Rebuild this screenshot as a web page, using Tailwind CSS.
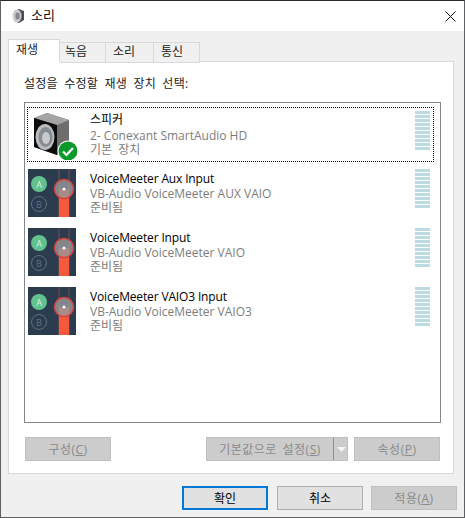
<!DOCTYPE html>
<html><head><meta charset="utf-8">
<script src="https://cdn.jsdelivr.net/npm/@tailwindcss/browser@4"></script>
</head>
<body class="w-[465px] h-[518px] overflow-hidden bg-[#5a5a58] font-['Open_Sans','Noto_Sans_CJK_KR',sans-serif] text-[12px] leading-[15px] text-black">
<div class="w-[465px] h-[518px] border border-[#5f6062] border-t-[#2b2b2b] bg-[#f0f0f0] flex flex-col">
  <!-- title -->
  <div class="h-[30px] bg-white flex items-center shrink-0">
    <svg class="ml-[10px] w-[14px] h-[16px]" viewBox="0 0 14 16"><path d="M3 3 8 1 13 3 13 12 8 15 3 13Z" fill="#4f4f4f"/><ellipse cx="6" cy="8" rx="4.500" ry="6.500" fill="#c8ccd0"/><ellipse cx="6.500" cy="8" rx="2.200" ry="3.500" fill="#83878b"/></svg>
    <span class="ml-[6px] mb-[2px] text-[13px] text-[#111]">소리</span>
    <svg class="ml-auto mr-[8px] w-[11px] h-[11px]" viewBox="0 0 11 11"><path d="M.5.5l10 10M10.5.5l-10 10" stroke="#111" stroke-width="1" fill="none"/></svg>
  </div>
  <!-- tabs + panel -->
  <div class="pt-[8px] px-[7px] flex flex-col">
    <div class="flex h-[23px] items-end relative z-10 text-[#222]">
      <div class="w-[52px] h-[23px] bg-white border border-b-0 border-[#d9d9d9] pt-[2px] pl-[7px]">재생</div>
      <div class="w-[46px] h-[21px] -mb-px bg-[#f0f0f0] border border-l-0 border-[#d9d9d9] pt-[1px] pl-[5px]">녹음</div>
      <div class="w-[48px] h-[21px] -mb-px bg-[#f0f0f0] border border-l-0 border-[#d9d9d9] pt-[1px] pl-[7px]">소리</div>
      <div class="w-[46px] h-[21px] -mb-px bg-[#f0f0f0] border border-l-0 border-[#d9d9d9] pt-[1px] pl-[7px]">통신</div>
    </div>
    <div class="w-[446px] h-[413px] -mt-px bg-white border border-[#d9d9d9] pt-[14px] pl-[15px] flex flex-col">
      <div class="h-[15px] text-[#222] tracking-[0.25px] [word-spacing:3px]">설정을 수정할 재생 장치 선택:</div>
      <div class="mt-[11px] w-[417px] h-[321px] border border-[#82878c] pt-[4px] pl-[2px] flex flex-col">
        <!-- row 1 -->
        <div class="w-[407px] h-[55px] border border-dotted border-black flex relative">
          <svg class="absolute left-[5px] top-[4px] w-[48px] h-[48px]" viewBox="0 0 48 48">
            <path d="M1 6 14 1 36 8 36 38 24 43 1 35Z" fill="#6e6e6e"/>
            <path d="M14 1 36 8 24 13 1 6Z" fill="#a4a4a4"/>
            <path d="M1 6 24 13 24 43 1 35Z" fill="#0c0c0c"/>
            <ellipse cx="12" cy="25" rx="9.500" ry="13" fill="#b8bcbf"/>
            <ellipse cx="12.500" cy="25" rx="7" ry="10" fill="#878c90"/>
            <ellipse cx="13" cy="26" rx="4" ry="6" fill="#c8cbcd"/>
            <circle cx="35" cy="39" r="10.500" fill="#fff"/>
            <circle cx="35" cy="39" r="9.500" fill="#0a9a2a"/>
            <path d="M30 39.500l3.500 3.500 6.500-7" stroke="#fff" stroke-width="2.200" fill="none"/>
          </svg>
          <div class="ml-[62px] mt-[4px] flex flex-col text-[#7d7d7d]">
            <div class="text-black h-[17px] [word-spacing:3px]">스피커</div>
            <div class="h-[14px] leading-[14px]">2- Conexant SmartAudio HD</div>
            <div class="h-[14px] leading-[14px] [word-spacing:3px]">기본 장치</div>
          </div>
          <div class="absolute left-[387px] top-[3px] w-[15px] h-[40px] bg-[repeating-linear-gradient(to_bottom,#bddce2_0,#bddce2_3px,transparent_3px,transparent_4px)]"></div>
        </div>
        <!-- rows 2-4 -->
        <div class="h-[4px]"></div>
        <div class="w-[407px] h-[55px] flex relative mb-[4px]">
          <svg class="absolute left-[1px] top-[3px] w-[48px] h-[48px]" viewBox="0 0 48 48">
            <rect width="48" height="48" fill="#2b3c4e"/>
            <circle cx="11" cy="15" r="8" fill="#62c28e"/>
            <text x="11" y="18.500" font-size="9" fill="#d8f0e2" text-anchor="middle">A</text>
            <circle cx="11" cy="35" r="7.500" fill="none" stroke="#5d7183"/>
            <text x="11" y="38.500" font-size="9" fill="#5d7183" text-anchor="middle">B</text>
            <path d="M31 0V48M41 0V48" stroke="#7e4c50" stroke-width="1"/>
            <rect x="31" y="20" width="10" height="28" fill="#f5583b"/>
            <circle cx="36" cy="20" r="9.500" fill="#98989c" fill-opacity=".8" stroke="#d9433a" stroke-width="1.500"/>
            <circle cx="36" cy="20" r="1.500" fill="#fff"/>
          </svg>
          <div class="ml-[63px] mt-[5px] flex flex-col text-[#7d7d7d]">
            <div class="text-black h-[16px] tracking-[-0.15px]">VoiceMeeter Aux Input</div>
            <div class="h-[14px] leading-[14px]">VB-Audio VoiceMeeter AUX VAIO</div>
            <div class="h-[14px] leading-[14px]">준비됨</div>
          </div>
          <div class="absolute left-[388px] top-[3px] w-[15px] h-[40px] bg-[repeating-linear-gradient(to_bottom,#bddce2_0,#bddce2_3px,transparent_3px,transparent_4px)]"></div>
        </div>
        <div class="w-[407px] h-[55px] flex relative mb-[4px]">
          <svg class="absolute left-[1px] top-[3px] w-[48px] h-[48px]" viewBox="0 0 48 48">
            <rect width="48" height="48" fill="#2b3c4e"/>
            <circle cx="11" cy="15" r="8" fill="#62c28e"/>
            <text x="11" y="18.500" font-size="9" fill="#d8f0e2" text-anchor="middle">A</text>
            <circle cx="11" cy="35" r="7.500" fill="none" stroke="#5d7183"/>
            <text x="11" y="38.500" font-size="9" fill="#5d7183" text-anchor="middle">B</text>
            <path d="M31 0V48M41 0V48" stroke="#7e4c50" stroke-width="1"/>
            <rect x="31" y="20" width="10" height="28" fill="#f5583b"/>
            <circle cx="36" cy="20" r="9.500" fill="#98989c" fill-opacity=".8" stroke="#d9433a" stroke-width="1.500"/>
            <circle cx="36" cy="20" r="1.500" fill="#fff"/>
          </svg>
          <div class="ml-[63px] mt-[5px] flex flex-col text-[#7d7d7d]">
            <div class="text-black h-[16px] tracking-[-0.15px]">VoiceMeeter Input</div>
            <div class="h-[14px] leading-[14px]">VB-Audio VoiceMeeter VAIO</div>
            <div class="h-[14px] leading-[14px]">준비됨</div>
          </div>
          <div class="absolute left-[388px] top-[3px] w-[15px] h-[40px] bg-[repeating-linear-gradient(to_bottom,#bddce2_0,#bddce2_3px,transparent_3px,transparent_4px)]"></div>
        </div>
        <div class="w-[407px] h-[55px] flex relative">
          <svg class="absolute left-[1px] top-[3px] w-[48px] h-[48px]" viewBox="0 0 48 48">
            <rect width="48" height="48" fill="#2b3c4e"/>
            <circle cx="11" cy="15" r="8" fill="#62c28e"/>
            <text x="11" y="18.500" font-size="9" fill="#d8f0e2" text-anchor="middle">A</text>
            <circle cx="11" cy="35" r="7.500" fill="none" stroke="#5d7183"/>
            <text x="11" y="38.500" font-size="9" fill="#5d7183" text-anchor="middle">B</text>
            <path d="M31 0V48M41 0V48" stroke="#7e4c50" stroke-width="1"/>
            <rect x="31" y="20" width="10" height="28" fill="#f5583b"/>
            <circle cx="36" cy="20" r="9.500" fill="#98989c" fill-opacity=".8" stroke="#d9433a" stroke-width="1.500"/>
            <circle cx="36" cy="20" r="1.500" fill="#fff"/>
          </svg>
          <div class="ml-[63px] mt-[5px] flex flex-col text-[#7d7d7d]">
            <div class="text-black h-[16px] tracking-[-0.15px]">VoiceMeeter VAIO3 Input</div>
            <div class="h-[14px] leading-[14px]">VB-Audio VoiceMeeter VAIO3</div>
            <div class="h-[14px] leading-[14px]">준비됨</div>
          </div>
          <div class="absolute left-[388px] top-[3px] w-[15px] h-[40px] bg-[repeating-linear-gradient(to_bottom,#bddce2_0,#bddce2_3px,transparent_3px,transparent_4px)]"></div>
        </div>
      </div>
      <!-- panel buttons -->
      <div class="mt-[14px] flex text-[#8a8a8a] tracking-[0.5px]">
        <div class="w-[86px] h-[24px] bg-[#cccccc] border border-[#bfbfbf] flex items-center justify-center ml-px">구성(<u>C</u>)</div>
        <div class="w-[142px] h-[24px] ml-[95px] bg-[#cccccc] border border-[#bfbfbf] flex items-center relative">
          <span class="w-[126px] text-center [word-spacing:2px]">기본값으로 설정(<u>S</u>)</span>
          <span class="w-px h-[22px] bg-[#8f8f8f]"></span>
          <svg class="ml-[3px] w-[9px] h-[5px]" viewBox="0 0 9 5"><path d="M0 0H9L4.500 5Z" fill="#f4f4f4"/></svg>
        </div>
        <div class="w-[86px] h-[24px] ml-[6px] bg-[#cccccc] border border-[#bfbfbf] flex items-center justify-center">속성(<u>P</u>)</div>
      </div>
    </div>
  </div>
  <!-- dialog buttons -->
  <div class="mt-[12px] flex justify-end pr-[7px]">
    <div class="w-[86px] h-[24px] bg-[#e1e1e1] border-2 border-[#0078d7] flex items-center justify-center">확인</div>
    <div class="w-[86px] h-[24px] ml-[9px] bg-[#e1e1e1] border border-[#adadad] flex items-center justify-center">취소</div>
    <div class="w-[86px] h-[24px] ml-[8px] bg-[#cccccc] border border-[#bfbfbf] text-[#8a8a8a] tracking-[0.5px] flex items-center justify-center">적용(<u>A</u>)</div>
  </div>
</div>
</body></html>
